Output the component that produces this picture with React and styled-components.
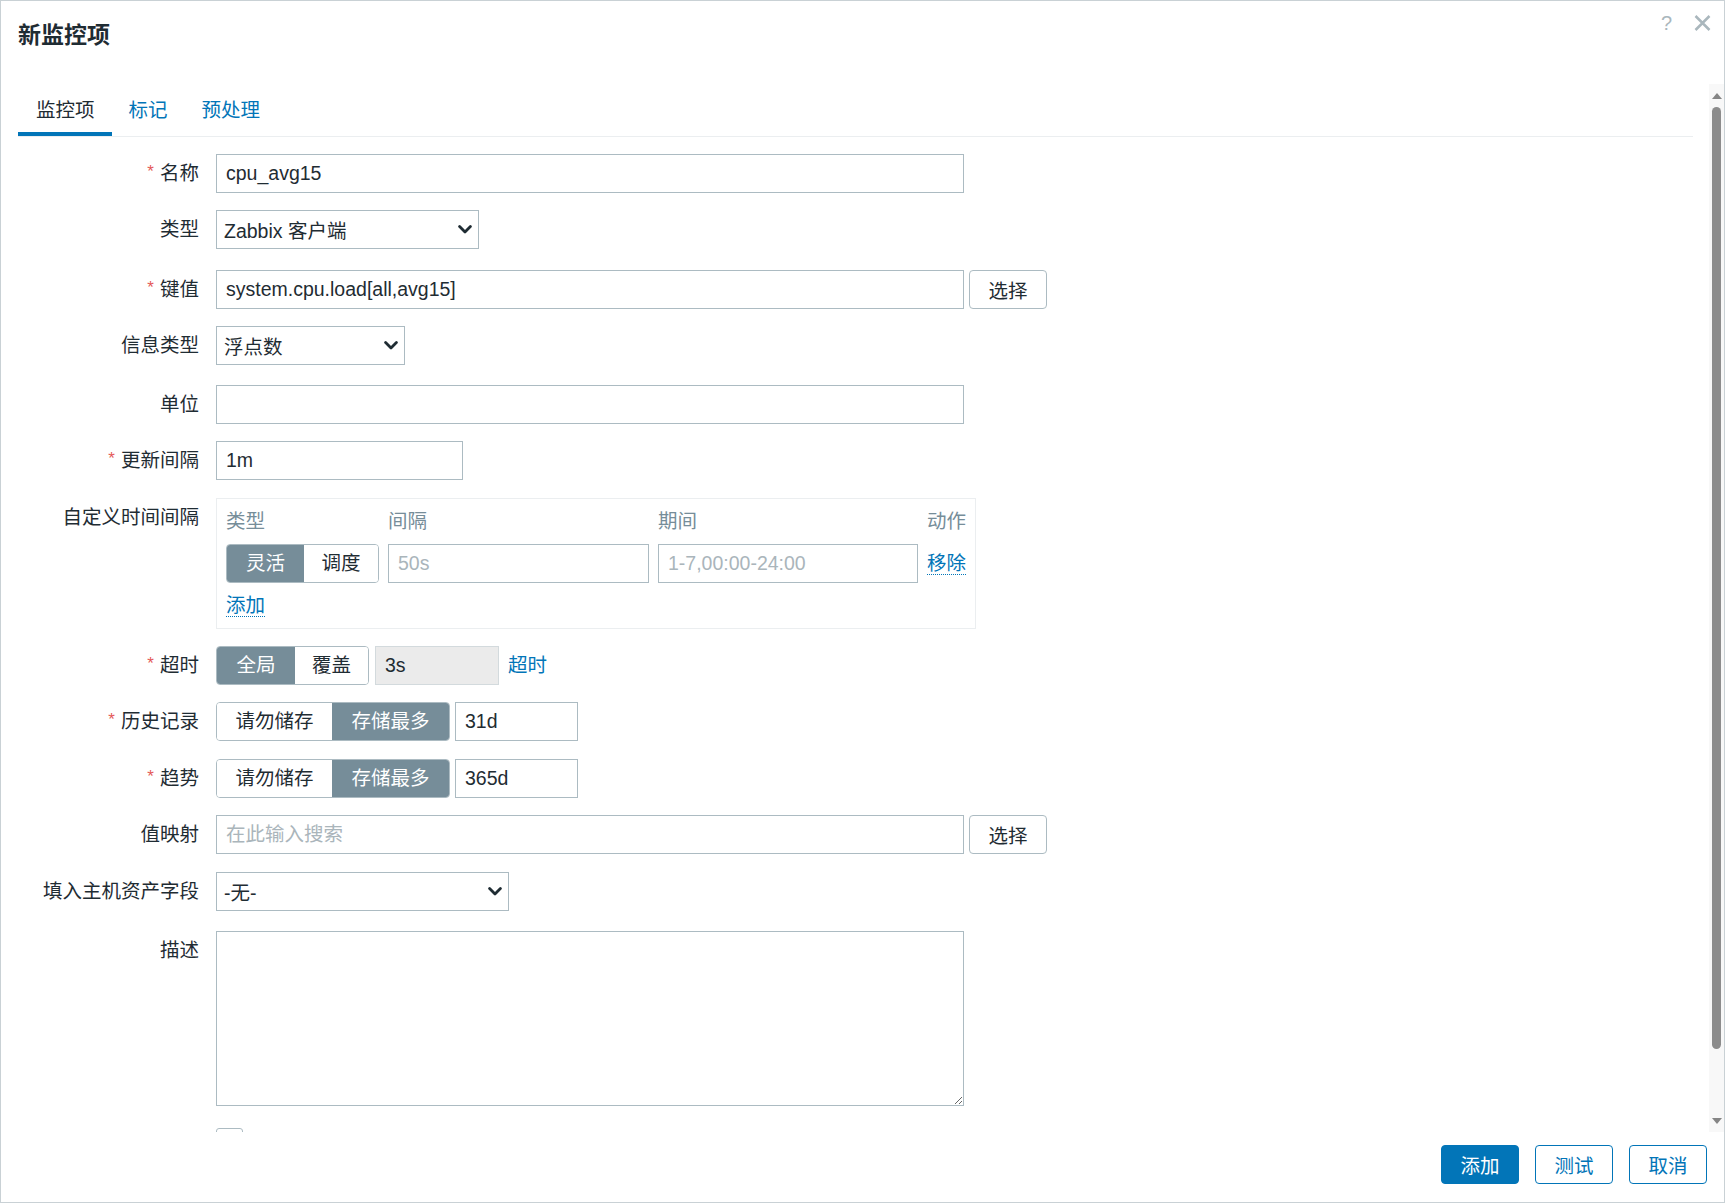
import React from "react";
import styled, { createGlobalStyle } from "styled-components";

const GlobalStyle = createGlobalStyle`
  html, body {
    margin: 0;
    padding: 0;
    background: #fff;
  }
  body {
    font-family: "Liberation Sans", Arial, "Noto Sans CJK SC", sans-serif;
    font-size: 19.5px;
    color: #1f2c33;
  }
  * {
    box-sizing: border-box;
  }
`;

const Dialog = styled.div`
  width: 1725px;
  height: 1203px;
  border: 1px solid #c9d1d5;
  background: #fff;
  display: flex;
  flex-direction: column;
  overflow: hidden;
`;

const Header = styled.div`
  height: 83px;
  flex-shrink: 0;
  display: flex;
  justify-content: space-between;
  align-items: flex-start;
  padding: 17px 13px 0 17px;
`;

const Title = styled.h4`
  margin: 0;
  font-size: 23px;
  line-height: 34px;
  font-weight: bold;
  color: #1f2c33;
`;

const HeaderControls = styled.div`
  display: flex;
  align-items: center;
  gap: 22px;
  margin-top: -5px;
  color: #aab7bd;
`;

const HelpMark = styled.span`
  font-size: 20px;
  line-height: 20px;
  color: #aab7bd;
`;

// body: scrolling form plus its scrollbar rail
const Body = styled.div`
  flex: 1;
  display: flex;
  min-height: 0;
`;

const FormArea = styled.div`
  flex: 1;
  overflow: hidden;
  padding: 4px 16px 0 17px;
`;

const TabList = styled.div`
  display: flex;
  border-bottom: 1px solid #ebeef0;
`;

const Tab = styled.div`
  height: 48px;
  line-height: 44px;
  padding: 0 17px;
  border-bottom: 4px solid ${(p) => (p.$active ? "#0275b8" : "transparent")};
  color: ${(p) => (p.$active ? "#1f2c33" : "#0275b8")};
  &:first-child {
    padding-left: 18px;
  }
`;

const Form = styled.div`
  margin-top: 17px;
`;

const Row = styled.div`
  display: flex;
  align-items: flex-start;
  margin-bottom: ${(p) => p.$mb || 17}px;
`;

const Label = styled.div`
  width: 181px;
  height: 39px;
  flex-shrink: 0;
  text-align: right;
  line-height: 39px;
  white-space: nowrap;
  color: #1f2c33;
`;

const Req = styled.span`
  color: #e45959;
  font-size: 17px;
  line-height: 0;
  position: relative;
  top: -3px;
  margin-right: 6px;
`;

const Field = styled.div`
  margin-left: 17px;
  display: flex;
  align-items: center;
  gap: ${(p) => p.$gap || 5}px;
`;

const TextInput = styled.input`
  width: ${(p) => p.$w}px;
  height: 39px;
  border: 1px solid #acbbc2;
  border-radius: 0;
  padding: 0 9px;
  font: inherit;
  color: #1f2c33;
  background: ${(p) => (p.disabled ? "#ebebeb" : "#fff")};
  border-color: ${(p) => (p.disabled ? "#d3dadd" : "#acbbc2")};
  outline: none;
  &::placeholder {
    color: #aab5bb;
  }
  &:disabled {
    color: #1f2c33;
  }
`;

const SelectBox = styled.div`
  width: ${(p) => p.$w}px;
  height: 39px;
  border: 1px solid #acbbc2;
  padding: 0 6px 0 7px;
  display: flex;
  align-items: center;
  justify-content: space-between;
  background: #fff;
  white-space: nowrap;
`;

const TextArea = styled.textarea`
  width: 748px;
  height: 175px;
  border: 1px solid #acbbc2;
  border-radius: 0;
  padding: 6px 9px;
  font: inherit;
  resize: vertical;
  outline: none;
  display: block;
`;

const AltButton = styled.button`
  width: 78px;
  height: 39px;
  border: 1px solid #acbbc2;
  border-radius: 4px;
  background: #fff;
  color: #1f2c33;
  font: inherit;
  padding: 0;
`;

const Seg = styled.div`
  display: flex;
  height: 39px;
  border: 1px solid #acbbc2;
  border-radius: 4px;
  overflow: hidden;
  flex-shrink: 0;
`;

const SegItem = styled.div`
  width: ${(p) => p.$w}px;
  line-height: 37px;
  text-align: center;
  background: ${(p) => (p.$on ? "#768d99" : "#fff")};
  color: ${(p) => (p.$on ? "#fff" : "#1f2c33")};
`;

const TextLink = styled.span`
  color: #0275b8;
  line-height: 39px;
  margin-left: ${(p) => p.$ml || 0}px;
`;

const DottedLink = styled.span`
  display: inline-block;
  color: #0275b8;
  line-height: 22px;
  border-bottom: 1px dotted #0275b8;
`;

const IntervalBox = styled.div`
  width: 760px;
  border: 1px solid #ebeef0;
  padding: 8px 8px 11px 9px;
`;

const IntervalGrid = styled.div`
  display: grid;
  grid-template-columns: 153px 261px 260px auto;
  column-gap: 9px;
  row-gap: 9px;
  align-items: center;
`;

const ColHead = styled.div`
  color: #768d99;
  line-height: 28px;
`;

const AddRow = styled.div`
  display: flex;
  margin-top: 11px;
`;

const Checkbox = styled.div`
  width: 27px;
  height: 27px;
  border: 1px solid #acbbc2;
  border-radius: 3px;
`;

// fake scrollbar rail on the right of the form
const Rail = styled.div`
  width: 15px;
  flex-shrink: 0;
  background: #f8f8f8;
  display: flex;
  flex-direction: column;
  align-items: center;
  padding: 9px 0 8px;
`;

const Thumb = styled.div`
  width: 9px;
  height: 942px;
  margin-top: 8px;
  border-radius: 5px;
  background: #8c8c8c;
`;

const RailSpacer = styled.div`
  flex: 1;
`;

const Footer = styled.div`
  height: 70px;
  flex-shrink: 0;
  display: flex;
  justify-content: flex-end;
  align-items: flex-start;
  gap: 16px;
  padding: 13px 17px 0 0;
`;

const FooterButton = styled.button`
  width: 78px;
  height: 39px;
  border-radius: 4px;
  border: 1px solid #0275b8;
  background: ${(p) => (p.$primary ? "#0275b8" : "#fff")};
  color: ${(p) => (p.$primary ? "#fff" : "#0275b8")};
  font: inherit;
  padding: 0;
`;

const Chevron = () => (
  <svg width="14" height="9" viewBox="0 0 14 9">
    <polyline
      points="1.6,1.6 7,7 12.4,1.6"
      fill="none"
      stroke="#1f2c33"
      strokeWidth="2.8"
      strokeLinecap="round"
      strokeLinejoin="round"
    />
  </svg>
);

const CloseIcon = () => (
  <svg width="17" height="16" viewBox="0 0 17 16">
    <path d="M1.5 1 L15.5 15 M15.5 1 L1.5 15" stroke="#aab7bd" strokeWidth="2.5" />
  </svg>
);

const Triangle = ({ down }) => (
  <svg width="10" height="6" viewBox="0 0 10 6">
    <polygon points={down ? "0,0 10,0 5,6" : "0,6 10,6 5,0"} fill="#858585" />
  </svg>
);

const FormRow = ({ label, required, mb, children, gap }) => (
  <Row $mb={mb}>
    <Label>
      {required && <Req>*</Req>}
      {label}
    </Label>
    <Field $gap={gap}>{children}</Field>
  </Row>
);

const Select = ({ w, value }) => (
  <SelectBox $w={w}>
    <span>{value}</span>
    <Chevron />
  </SelectBox>
);

const StorageRow = ({ label, value, mb }) => (
  <FormRow label={label} required mb={mb}>
    <Seg>
      <SegItem $w={115}>请勿储存</SegItem>
      <SegItem $w={117} $on>存储最多</SegItem>
    </Seg>
    <TextInput $w={123} defaultValue={value} />
  </FormRow>
);

export default function App() {
  return (
    <>
      <GlobalStyle />
      <Dialog>
        <Header>
          <Title>新监控项</Title>
          <HeaderControls>
            <HelpMark>?</HelpMark>
            <CloseIcon />
          </HeaderControls>
        </Header>

        <Body>
          <FormArea>
            <TabList>
              <Tab $active>监控项</Tab>
              <Tab>标记</Tab>
              <Tab>预处理</Tab>
            </TabList>

            <Form>
              <FormRow label="名称" required>
                <TextInput $w={748} defaultValue="cpu_avg15" />
              </FormRow>
              <FormRow label="类型" mb={21}>
                <Select w={263} value="Zabbix 客户端" />
              </FormRow>
              <FormRow label="键值" required>
                <TextInput $w={748} defaultValue="system.cpu.load[all,avg15]" />
                <AltButton>选择</AltButton>
              </FormRow>
              <FormRow label="信息类型" mb={20}>
                <Select w={189} value="浮点数" />
              </FormRow>
              <FormRow label="单位">
                <TextInput $w={748} />
              </FormRow>
              <FormRow label="更新间隔" required mb={18}>
                <TextInput $w={247} defaultValue="1m" />
              </FormRow>
              <FormRow label="自定义时间间隔">
                <IntervalBox>
                  <IntervalGrid>
                    <ColHead>类型</ColHead>
                    <ColHead>间隔</ColHead>
                    <ColHead>期间</ColHead>
                    <ColHead>动作</ColHead>
                    <Seg>
                      <SegItem $w={77} $on>灵活</SegItem>
                      <SegItem $w={74}>调度</SegItem>
                    </Seg>
                    <TextInput $w={261} placeholder="50s" />
                    <TextInput $w={260} placeholder="1-7,00:00-24:00" />
                    <div>
                      <DottedLink>移除</DottedLink>
                    </div>
                  </IntervalGrid>
                  <AddRow>
                    <DottedLink>添加</DottedLink>
                  </AddRow>
                </IntervalBox>
              </FormRow>
              <FormRow label="超时" required gap={6}>
                <Seg>
                  <SegItem $w={78} $on>全局</SegItem>
                  <SegItem $w={73}>覆盖</SegItem>
                </Seg>
                <TextInput $w={124} defaultValue="3s" disabled />
                <TextLink $ml={3}>超时</TextLink>
              </FormRow>
              <StorageRow label="历史记录" value="31d" mb={18} />
              <StorageRow label="趋势" value="365d" />
              <FormRow label="值映射" mb={18}>
                <TextInput $w={748} placeholder="在此输入搜索" />
                <AltButton>选择</AltButton>
              </FormRow>
              <FormRow label="填入主机资产字段" mb={20}>
                <Select w={293} value="-无-" />
              </FormRow>
              <FormRow label="描述" mb={22}>
                <TextArea />
              </FormRow>
              <FormRow label="已启用">
                <Checkbox />
              </FormRow>
            </Form>
          </FormArea>

          <Rail>
            <Triangle />
            <Thumb />
            <RailSpacer />
            <Triangle down />
          </Rail>
        </Body>

        <Footer>
          <FooterButton $primary>添加</FooterButton>
          <FooterButton>测试</FooterButton>
          <FooterButton>取消</FooterButton>
        </Footer>
      </Dialog>
    </>
  );
}
